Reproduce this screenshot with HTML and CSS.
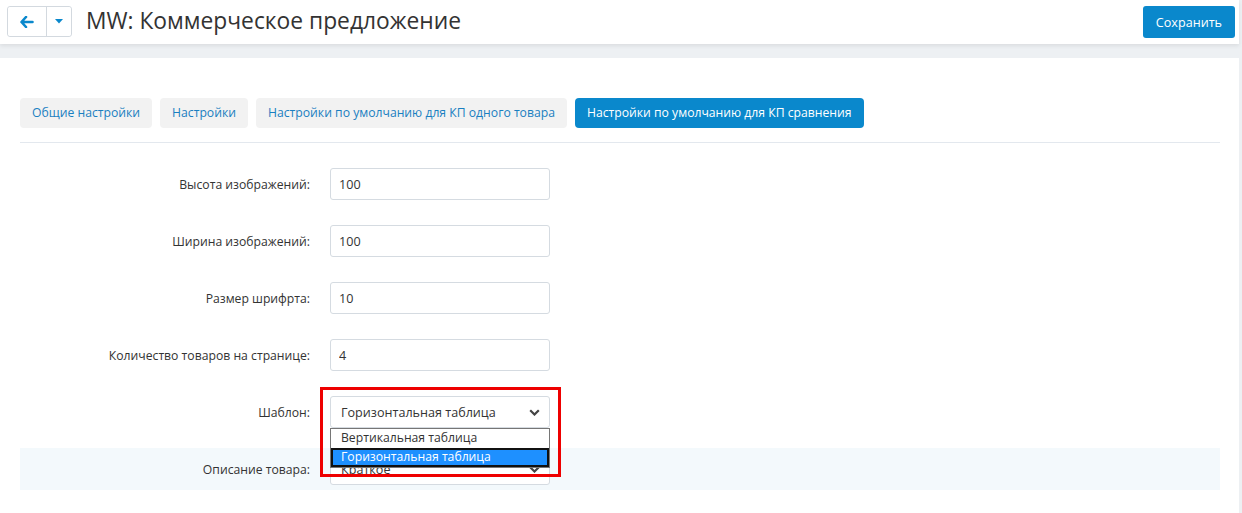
FILE: index.html
```html
<!DOCTYPE html>
<html lang="ru">
<head>
  <meta charset="UTF-8" />
  <title>MW: Коммерческое предложение</title>
  <link rel="stylesheet" href="styles.css">
</head>
<body>
  <div class="topbar">
    <div class="back-group">
      <button class="back-btn" type="button">
        <svg width="14" height="12" viewBox="0 0 14 12"><path d="M6 1 L1.5 6 L6 11 M2 6 H12.5" fill="none" stroke="#0a88cc" stroke-width="2.6" stroke-linecap="round" stroke-linejoin="round"/></svg>
      </button>
      <button class="caret-btn" type="button">
        <svg width="8" height="5" viewBox="0 0 8 5"><path d="M0 0 H8 L4 4.5 Z" fill="#0a88cc"/></svg>
      </button>
    </div>
    <h1 class="page-title">MW: Коммерческое предложение</h1>
    <button class="save-btn" type="button">Сохранить</button>
  </div>

  <div class="card">
    <div class="tabs">
      <a class="tab">Общие настройки</a>
      <a class="tab">Настройки</a>
      <a class="tab">Настройки по умолчанию для КП одного товара</a>
      <a class="tab active">Настройки по умолчанию для КП сравнения</a>
    </div>

    <div class="form">
      <div class="row">
        <label>Высота изображений:</label>
        <input type="text" value="100" />
      </div>
      <div class="row">
        <label>Ширина изображений:</label>
        <input type="text" value="100" />
      </div>
      <div class="row">
        <label>Размер шрифрта:</label>
        <input type="text" value="10" />
      </div>
      <div class="row">
        <label>Количество товаров на странице:</label>
        <input type="text" value="4" />
      </div>
      <div class="row">
        <label>Шаблон:</label>
        <div class="field">
          <div class="select">
            <span>Горизонтальная таблица</span>
            <svg width="11" height="7" viewBox="0 0 11 7"><path d="M1.2 1.2 L5.5 5.5 L9.8 1.2" fill="none" stroke="#444" stroke-width="2.2"/></svg>
          </div>
          <ul class="options">
            <li>Вертикальная таблица</li>
            <li class="selected">Горизонтальная таблица</li>
          </ul>
          <div class="highlight"></div>
        </div>
      </div>
      <div class="row shaded">
        <label>Описание товара:</label>
        <div class="select">
          <span>Краткое</span>
          <svg width="11" height="7" viewBox="0 0 11 7"><path d="M1.2 1.2 L5.5 5.5 L9.8 1.2" fill="none" stroke="#444" stroke-width="2.2"/></svg>
        </div>
      </div>
    </div>
  </div>
</body>
</html>
```

FILE: styles.css
```css
body {
  margin: 0;
  background: #edf0f3;
  font-family: "Open Sans", "Liberation Sans", sans-serif;
  font-size: 12.2px;
  color: #333;
}

.topbar {
  height: 44px;
  background: white;
  display: flex;
  align-items: center;
  padding: 0 4px 0 7px;
  box-sizing: border-box;
  margin-right: 3px;
  box-shadow: 0 2px 4px rgba(0,0,0,0.08);
}
.back-group {
  display: flex;
  height: 31px;
  border: 1px solid #d3d9df;
  border-radius: 3px;
  box-sizing: border-box;
  margin-top: -1px;
}
.back-group button {
  background: white;
  border: none;
  padding: 0;
  display: flex;
  align-items: center;
  justify-content: center;
  cursor: pointer;
}
.back-btn {
  width: 39px;
  border-right: 1px solid #d3d9df !important;
  border-radius: 3px 0 0 3px;
}
.caret-btn {
  width: 24px;
  border-radius: 0 3px 3px 0;
}
.page-title {
  margin: 0 0 0 14px;
  font-size: 22.8px;
  font-weight: normal;
  color: #333;
  flex: 1;
  position: relative;
  top: -2px;
}
.save-btn {
  background: #0a88cc;
  color: white;
  border: none;
  border-radius: 3px;
  height: 32px;
  padding: 0 13px;
  font-family: inherit;
  font-size: 12.6px;
  cursor: pointer;
}

.card {
  background: white;
  margin: 14px 3px 0 0;
  padding: 40px 19px 40px 20px;
}
.tabs {
  display: flex;
  gap: 8px;
  padding-bottom: 14px;
  border-bottom: 1px solid #e3e8ee;
}
.tab {
  height: 30px;
  line-height: 30px;
  padding: 0 12px;
  background: #f2f2f2;
  color: #1a7fc1;
  border-radius: 4px;
  cursor: pointer;
}
.tab.active {
  background: #0a88cc;
  color: white;
}

.form {
  padding-top: 25px;
}
.row {
  display: grid;
  grid-template-columns: 290px 220px;
  column-gap: 20px;
  align-items: center;
  margin-bottom: 25px;
}
.row label {
  text-align: right;
}
.row input, .select {
  height: 32px;
  box-sizing: border-box;
  border: 1px solid #d5dbe1;
  border-radius: 3px;
  padding: 0 8px;
  font-family: inherit;
  font-size: 12.6px;
  color: #333;
  width: 220px;
}
.select {
  display: flex;
  align-items: center;
  justify-content: space-between;
  background: white;
  padding: 0 9px 0 10px;
}
.row.shaded {
  background: #f3f9fc;
  padding: 5px 0;
  margin-top: -5px;
  margin-bottom: 0;
}

.field {
  position: relative;
}
.options {
  position: absolute;
  left: 0;
  top: 100%;
  width: 220px;
  box-sizing: border-box;
  margin: 0;
  padding: 0;
  list-style: none;
  background: white;
  border: 1px solid #767676;
  z-index: 5;
}
.options li {
  height: 19px;
  line-height: 18px;
  padding: 0 10px;
  box-sizing: border-box;
}
.options li.selected {
  background: #1e90ff;
  color: white;
  outline: 2px solid #111;
  outline-offset: -2px;
}
.highlight {
  position: absolute;
  left: -10px;
  top: -9px;
  width: 241px;
  height: 90px;
  box-sizing: border-box;
  border: 3px solid #ee0000;
  z-index: 6;
}
```
